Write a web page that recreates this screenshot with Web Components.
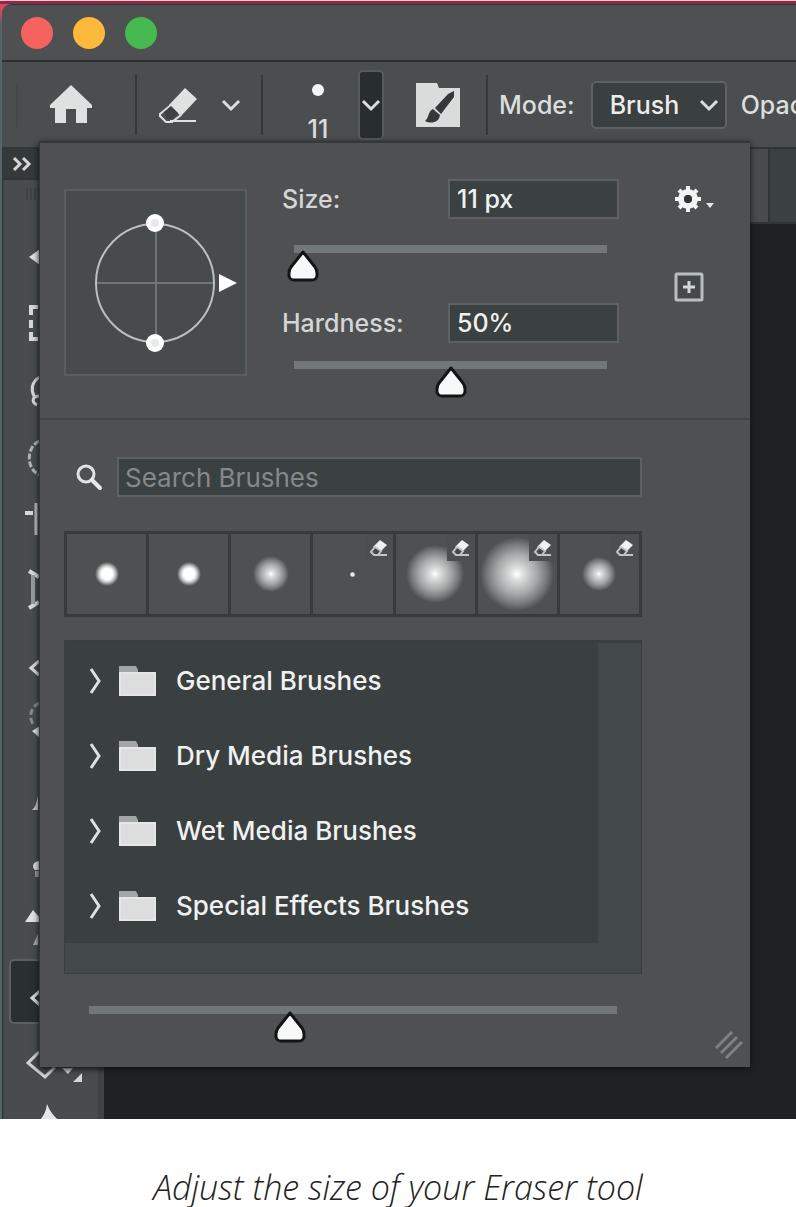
<!DOCTYPE html>
<html lang="en">
<head>
<meta charset="utf-8">
<title>Eraser tool</title>
<style>
  body { margin: 0; background: #fff; font-family: Inter, "Liberation Sans", sans-serif; }
</style>
</head>
<body>
<tutorial-figure>
  <app-window>
    <title-bar slot="title"></title-bar>
    <options-bar slot="options"></options-bar>
    <tool-box slot="tools"></tool-box>
    <document-area slot="document"></document-area>
    <brush-panel slot="panel"></brush-panel>
  </app-window>
  <span slot="caption">Adjust the size of your Eraser tool</span>
</tutorial-figure>

<script>
const define = (name, html) => {
  const template = document.createElement('template');
  customElements.define(name, class extends HTMLElement {
    connectedCallback() {
      if (this.shadowRoot) return;
      const root = this.attachShadow({ mode: 'open' });
      template.innerHTML = typeof html === 'function' ? html(this) : html;
      root.append(template.content.cloneNode(true));
    }
  });
};

const icons = {
  home: [42, 40, '<path fill="#dfe1e1" d="M21 0 42 20v3h-5v15H26V24H16v14H5V23H0v-3z"/>'],
  eraser: [40, 36, '<path fill="#e0e1e1" d="M27 1 39 12 23 29 11 18z"/><path fill="none" stroke="#e0e1e1" stroke-width="2" d="m13 18-11 9v2l6 6h6l9-7M12 34h26"/><path fill="#3b4041" d="m6 25 7-6 7 7-6 6H9z"/>'],
  chevron: [20, 14, '<path fill="none" stroke="#dcdede" stroke-width="3" d="m2 3 8 8 8-8"/>'],
  preset: [44, 44, '<path fill="#dadcdc" d="M0 0h21l2 5h21v39H0z"/><path fill="#33383a" d="M38 8v6L25 31l-6-6L32 11zM17 26l7 6c-1 8-9 9-15 6 4-3 3-10 8-12z"/>'],
  gear: [28, 28, '<circle cx="14" cy="14" r="7" fill="none" stroke="#f2f3f3" stroke-width="6"/><path stroke="#f2f3f3" stroke-width="4" d="M14 1v6M14 21v6M1 14h6M21 14h6M5 5l4 4M19 19l4 4M23 5l-4 4M9 19l-4 4"/><circle cx="14" cy="14" r="4" fill="#303536"/>'],
  caret: [8, 6, '<path fill="#e5e6e6" d="M0 0h8L4 5z"/>'],
  add: [30, 30, '<rect x="2" y="2" width="26" height="26" rx="1" fill="#43484a" stroke="#b9bdbd" stroke-width="3"/><path stroke="#d4d7d7" stroke-width="3" d="M15 9v12M9 15h12"/>'],
  search: [28, 28, '<circle cx="11" cy="11" r="8" fill="none" stroke="#e2e4e4" stroke-width="3"/><path stroke="#e9eaea" stroke-width="4" stroke-linecap="round" d="m17 17 8 8"/>'],
  right: [12, 26, '<path fill="none" stroke="#dfe0e0" stroke-width="3" d="m2 1 8 12-8 12"/>'],
  folder: [37, 30, '<path fill="#a3a6a6" d="M0 0h17l2 4v6H0z"/><path fill="#dcdddd" d="M0 6h37v24H0z"/><path fill="none" stroke="#eeefef" d="M1 7h35v22H1z"/>'],
  miniEraser: [18, 16, '<path fill="#eff0f0" d="m10 0 7 5-7 7-7-5z"/><path fill="#43484a" stroke="#c4c6c6" stroke-width="2" d="M5 7 1 12l3 3h4l3-4z"/><path stroke="#c4c6c6" stroke-width="2" d="M5 15h12"/>'],
  double: [20, 14, '<path fill="none" stroke="#d5d7d7" stroke-width="3" d="m2 1 6 6-6 6M11 1l6 6-6 6"/>'],
  grip: [28, 28, '<path stroke="#7c8182" stroke-width="3" d="M1 17 17 1M6 22 22 6M11 27l16-16"/>'],
  angle: [146, 132, '<g fill="none" stroke="#6f7475" stroke-width="2"><path d="M62 6v120M2 66h118"/></g><circle cx="61" cy="66" r="59" fill="none" stroke="#bdc0c0" stroke-width="2"/><circle cx="61" cy="6" r="9" fill="#fff"/><circle cx="61" cy="126" r="9" fill="#fff"/><circle cx="61" cy="6" r="4" fill="#e8e9e9"/><circle cx="61" cy="126" r="4" fill="#e8e9e9"/><path fill="#fff" d="M125 57v18l18-9z"/>']
};
const icon = (name, extra = '') =>
  `<svg ${extra} width="${icons[name][0]}" height="${icons[name][1]}" viewBox="0 0 ${icons[name][0]} ${icons[name][1]}" aria-hidden="true">${icons[name][2]}</svg>`;
const resetButton = 'button{appearance:none;border:0;padding:0;margin:0;background:none;font:inherit;color:inherit;display:flex;flex:none;align-items:center;justify-content:center}svg{display:block;flex:none;overflow:visible}';

define('tutorial-figure', `
  <style>
    :host { display: block; }
    figure { margin: 0; }
    figcaption { padding: 48px 0 0; text-align: center; color: #222;
      font: italic 300 34px/40px "Open Sans", "Noto Sans", sans-serif; }
  </style>
  <figure><slot></slot><figcaption><slot name="caption"></slot></figcaption></figure>`);

define('app-window', `
  <style>
    :host { display: block; padding: 4px 0 0 2px; overflow: hidden;
      background: linear-gradient(#ffc6d0 0 1px, #8c2a45 1px 4px, transparent 4px), linear-gradient(#d04a60 12px, #56646a 24px); }
    .frame { border-top: 1px solid #303536; border-top-left-radius: 10px; background: #4d4f50; overflow: hidden; }
    .work { display: grid; grid-template-columns: 98px minmax(0, 1fr); }
    .tools { grid-area: 1 / 1; display: grid; }
    .doc { grid-area: 1 / 2; display: grid; }
    .panel { grid-area: 1 / 1 / 2 / 3; z-index: 1; margin: -8px 46px 52px 37px; }
  </style>
  <div class="frame">
    <slot name="title"></slot>
    <slot name="options"></slot>
    <div class="work">
      <div class="tools"><slot name="tools"></slot></div>
      <div class="doc"><slot name="document"></slot></div>
      <div class="panel"><slot name="panel"></slot></div>
    </div>
  </div>`);

define('title-bar', `
  <style>
    :host { display: flex; align-items: center; gap: 20px; height: 57px; padding-left: 19px; background: #4e5051;
      border-bottom: 2px solid #2d3133; box-sizing: border-box; }
    ${resetButton}
    button { width: 32px; height: 32px; border-radius: 50%; }
    .close { background: #f5635f; } .min { background: #fdb93c; } .zoom { background: #46b950; }
  </style>
  <button class="close" aria-label="Close"></button>
  <button class="min" aria-label="Minimise"></button>
  <button class="zoom" aria-label="Zoom"></button>`);

define('options-bar', `
  <style>
    :host { display: flex; align-items: center; height: 87px; box-sizing: border-box; padding: 1px 0 0 14px;
      border-bottom: 2px solid #303536; background: #4b4e4f; color: #dcdede; font-size: 25px; font-weight: 500;
      white-space: nowrap; overflow: hidden; }
    ${resetButton}
    .handle { flex: none; width: 2px; height: 44px; background: #444849; margin-right: 32px; }
    .sep { flex: none; width: 2px; height: 60px; background: #333839; }
    .home { margin-right: 43px; }
    .eraser { margin: 0 23px 0 21px; }
    .menu { margin-right: 20px; }
    .brush { flex-direction: column; width: 32px; height: 70px; margin: 0 24px 0 39px; justify-content: space-between; line-height: 22px; }
    .brush i { width: 12px; height: 12px; margin-top: 14px; border-radius: 50%; background: #f4f5f5; }
    .open { width: 26px; height: 70px; border: 2px solid #565b5c; border-radius: 5px; background: #282d2f; margin-right: 32px; }
    .preset { margin-right: 26px; }
    label { margin: 0 16px 0 11px; }
    select { appearance: none; width: 136px; height: 48px; margin: 0 14px 0 0; padding: 0 0 0 17px; flex: none;
      font: inherit; color: #eceded; border: 2px solid #5d6364; border-radius: 5px;
      background: #3a3f40 url("data:image/svg+xml,%3Csvg xmlns='http://www.w3.org/2000/svg' width='20' height='14'%3E%3Cpath fill='none' stroke='%23dcdede' stroke-width='3' d='m2 3 8 8 8-8'/%3E%3C/svg%3E") no-repeat right 6px center; }
  </style>
  <span class="handle"></span>
  <button class="home" aria-label="Home">${icon('home')}</button>
  <span class="sep"></span>
  <button class="eraser" aria-label="Eraser tool">${icon('eraser')}</button>
  <button class="menu" aria-label="Tool presets">${icon('chevron')}</button>
  <span class="sep"></span>
  <button class="brush"><i></i>11</button>
  <button class="open" aria-label="Brush preset picker">${icon('chevron')}</button>
  <button class="preset" aria-label="Brush settings">${icon('preset')}</button>
  <span class="sep"></span>
  <label for="mode">Mode:</label>
  <select id="mode"><option>Brush</option><option>Pencil</option><option>Block</option></select>
  <span>Opac</span>`);

const tools = [
  ['Move', '<path fill="#dfe1e1" d="M27 35 38 27v16z"/>'],
  ['Marquee', '<path fill="none" stroke="#d5d8d8" stroke-width="4" d="M36 18h-7v8M29 31v8M29 43v7h7"/>'],
  ['Lasso', '<path fill="none" stroke="#d5d8d8" stroke-width="3" d="M38 21c-9 5-9 13-6 19M38 40c-8 0-9 6-3 9"/>'],
  ['Quick selection', '<path fill="none" stroke="#aeb2b2" stroke-width="3" stroke-dasharray="6 2" d="M37 18c-13 7-13 27 0 34"/>'],
  ['Crop', '<path fill="none" stroke="#d5d8d8" stroke-width="4" d="M23 23h8"/><path stroke="#b9bcbc" stroke-width="3" d="M34 13v32"/>'],
  ['Frame', '<path fill="none" stroke="#d5d8d8" stroke-width="4" d="m27 14 10 6M27 51l10-6"/><path stroke="#969b9b" stroke-width="4" d="M31 18v29"/>'],
  ['Eyedropper', '<path fill="none" stroke="#d5d8d8" stroke-width="3" d="m37 37-8 7 8 7"/>'],
  ['Healing', '<path fill="none" stroke="#858a8b" stroke-width="3" stroke-dasharray="6 3" d="M37 12c-10 5-10 17-5 22"/><path fill="#dfe1e1" d="m30 40 8-5v12z"/>'],
  ['Brush', '<path fill="#c4c7c7" d="M36 38v14h-6c4-3 4-7 6-14z"/>'],
  ['Clone stamp', '<path fill="#dfe1e1" d="M38 36c-8 0-8 7-5 9h5z"/><path fill="#989c9d" d="M33 46h5v6h-5z"/>'],
  ['History brush', '<path fill="#dfe1e1" d="m31 18 7 8v4H23z"/><path fill="#a8acac" d="M36 42v11h-5z"/>'],
  ['Eraser', '<path fill="none" stroke="#d5d8d8" stroke-width="3" d="m38 33-8 7 8 7"/>'],
  ['Paint bucket', '<path fill="none" stroke="#cfd2d2" stroke-width="3" d="M37 26 26 37l17 14 10-10"/><path fill="#d5d8d8" d="M60 42h11l-5 6zM80 47v9h-9z"/>'],
  ['Blur', '<path fill="#e4e5e5" d="M45 11c3 8 8 13 12 17v20H37V28c4-4 7-9 8-17z"/>']
];
define('tool-box', `
  <style>
    :host { display: block; contain: size; overflow: hidden; background: linear-gradient(90deg, #303536 1px, #484c4e 2px);
      border-right: 2px solid #3d4243; }
    ${resetButton}
    .expand { width: 100%; height: 31px; background: #34393a; justify-content: flex-start; padding-left: 10px;
      border-bottom: 2px solid #303536; box-sizing: border-box; }
    .grip { height: 12px; width: 46px; margin: 8px 0 22px 24px; background: repeating-linear-gradient(90deg, #3d4243 0 2px, transparent 2px 4px); }
    .tool { width: 100%; height: 67px; justify-content: flex-start; box-sizing: border-box; }
    .tool[aria-pressed=true] { background: linear-gradient(#2a2f31, #2a2f31) padding-box; border: 2px solid #5b6061; border-radius: 5px;
      width: 80px; height: 65px; margin: 0 0 2px 7px; }
    .tool[aria-pressed=true] svg { margin-left: -9px; }
  </style>
  <button class="expand" aria-label="Expand tools">${icon('double')}</button>
  <div class="grip"></div>
  ${tools.map(([name, art]) => `<button class="tool" aria-label="${name}" aria-pressed="${name === 'Eraser'}"><svg width="90" height="67" viewBox="0 0 90 67" aria-hidden="true">${art}</svg></button>`).join('')}`);

define('document-area', `
  <style>
    :host { display: flex; flex-direction: column; background: #1e2225; border-left: 4px solid #3e4344; }
    .tabs { display: flex; height: 75px; background: #3b4042; box-sizing: border-box; border-bottom: 2px solid #303536; }
    .tab { flex: 1; margin-right: 26px; background: #484c4d; border-right: 2px solid #303536; }
  </style>
  <div class="tabs"><div class="tab"></div></div>`);

const rangeStyles = `
  input[type=range] { appearance: none; display: block; height: 38px; box-sizing: border-box; margin: 0;
    background: linear-gradient(#727878, #727878) no-repeat 16px 0 / calc(100% - 32px) 8px; }
  input[type=range]::-webkit-slider-runnable-track { height: 38px; background: none; }
  input[type=range]::-webkit-slider-thumb { appearance: none; width: 32px; height: 32px; margin-top: 5px;
    background: url("data:image/svg+xml,%3Csvg xmlns='http://www.w3.org/2000/svg' width='32' height='32'%3E%3Cpath fill='%23f8f8f8' stroke='%23111516' stroke-width='3' stroke-linejoin='round' d='M16 2 28 17q2 3 2 6v3q-1 4-5 4H7q-4 0-5-4v-3q0-3 2-6z'/%3E%3C/svg%3E") no-repeat; }`;

define('brush-setting', host => `
  <style>
    :host { display: block; }
    .row { display: flex; align-items: center; justify-content: space-between; margin-bottom: var(--slider-gap, 26px); }
    input[type=text] { box-sizing: border-box; width: 171px; height: 40px; padding: 0 0 0 7px; font: inherit; color: #f0f1f1;
      background: #3b4041; border: 2px solid #5c6263; border-radius: 0; margin: 0; }
    ${rangeStyles}
    input[type=range] { width: calc(100% + 8px); margin: 0 -4px; }
  </style>
  <div class="row"><label for="text">${host.getAttribute('label')}:</label><input id="text" type="text" value="${host.getAttribute('text')}"></div>
  <input type="range" min="0" max="100" value="${host.getAttribute('value')}" aria-label="${host.getAttribute('label')}">`);

define('brush-swatch', host => `
  <style>
    :host { display: block; position: relative; flex: 1; }
    ${resetButton}
    button { width: 100%; height: 100%; }
    i { width: ${host.getAttribute('size')}px; height: ${host.getAttribute('size')}px; border-radius: 50%;
      background: radial-gradient(closest-side, ${host.getAttribute('fill')}); }
    .badge { position: absolute; top: 0; right: 0; padding: 6px 5px 5px 5px; background: #4c4f50; display: block; }
  </style>
  <button aria-label="Brush preset"><i></i></button>
  ${host.hasAttribute('eraser') ? `<span class="badge">${icon('miniEraser')}</span>` : ''}`);

define('brush-folder', `
  <style>
    :host { display: block; }
    ${resetButton}
    button { width: 100%; height: 75px; justify-content: flex-start; padding-left: 24px; }
    .folder { margin: 0 20px 0 18px; }
  </style>
  <button aria-expanded="false">${icon('right')}${icon('folder', 'class="folder"')}<slot></slot></button>`);

const hard = '#fff 0 45%, rgba(255,255,255,.75) 65%, rgba(255,255,255,0) 100%';
const soft = '#fff 0, #dedfdf 16%, #a5a8a8 55%, #777b7c 80%, rgba(80,83,84,0) 100%';
define('brush-panel', `
  <style>
    :host { display: block; position: relative; background: #4e5051; color: #d3d6d6; font-size: 25px; line-height: 32px; font-weight: 500;
      border-top: 2px solid #343839; border-left: 1px solid #303536; box-shadow: 0 2px 6px #0d1113; }
    ${resetButton}
    ${rangeStyles}
    .settings { display: grid; grid-template-columns: 183px minmax(0, 337px) 40px; justify-content: start;
      padding: 36px 0 19px 24px; border-bottom: 2px solid #3f4445; }
    .angle { height: 187px; box-sizing: border-box; margin-top: 10px; border: 2px solid #585d5e; background: #474b4c; display: grid; place-content: center; padding: 0 0 0 23px; }
    .form { margin-left: 35px; margin-right: -35px; }
    .form brush-setting + brush-setting { margin-top: 20px; --slider-gap: 18px; }
    .actions { margin-left: 90px; padding-top: 6px; display: flex; flex-direction: column; gap: 59px; align-items: start; }
    .actions .gear { gap: 4px; }
    .actions .gear svg + svg { margin-top: 14px; }
    .library { padding: 37px 108px 23px 24px; }
    .search { display: flex; align-items: center; gap: 14px; padding-left: 11px; margin-bottom: 34px; }
    .search label { display: flex; }
    .search input { flex: 1; min-width: 0; box-sizing: border-box; height: 40px; padding: 0 0 0 6px; margin: 0; font: inherit; font-size: 26px; font-weight: 400;
      background: #3b4041; border: 2px solid #5c6263; color: #f0f1f1; }
    .search input::placeholder { color: #85898a; opacity: 1; }
    .strip { display: flex; gap: 3px; padding: 3px; height: 86px; box-sizing: border-box; margin-bottom: 23px; background: #363b3c; }
    .strip brush-swatch { background: #4e5051; }
    .folders { background: #434849; padding: 0 43px 30px 0; border: 1px solid #393e3f; border-top-width: 3px; color: #f0f1f1; font-size: 26px; }
    .folders div { background: #3a3f40; }
    input.scale { width: calc(100% - 18px); margin: 32px 9px 0; }
    .resize { position: absolute; right: 7px; bottom: 8px; }
  </style>
  <div class="settings">
    <div class="angle">${icon('angle')}</div>
    <div class="form">
      <brush-setting label="Size" text="11 px" value="3"></brush-setting>
      <brush-setting label="Hardness" text="50%" value="50"></brush-setting>
    </div>
    <div class="actions">
      <button class="gear" aria-label="Panel menu">${icon('gear')}${icon('caret')}</button>
      <button aria-label="New preset">${icon('add')}</button>
    </div>
  </div>
  <div class="library">
    <div class="search"><label for="q" aria-label="Search Brushes">${icon('search')}</label><input id="q" type="text" placeholder="Search Brushes"></div>
    <div class="strip">
      <brush-swatch size="24" fill="${hard}"></brush-swatch>
      <brush-swatch size="24" fill="${hard}"></brush-swatch>
      <brush-swatch size="36" fill="${soft}"></brush-swatch>
      <brush-swatch size="5" fill="#e8e9e9 0 60%, #999 100%" eraser></brush-swatch>
      <brush-swatch size="58" fill="${soft}" eraser></brush-swatch>
      <brush-swatch size="74" fill="${soft}" eraser></brush-swatch>
      <brush-swatch size="34" fill="${soft}" eraser></brush-swatch>
    </div>
    <div class="folders"><div>
      <brush-folder>General Brushes</brush-folder>
      <brush-folder>Dry Media Brushes</brush-folder>
      <brush-folder>Wet Media Brushes</brush-folder>
      <brush-folder>Special Effects Brushes</brush-folder>
    </div></div>
    <input class="scale" type="range" min="0" max="100" value="38" aria-label="Thumbnail size">
  </div>
  <span class="resize">${icon('grip')}</span>`);
</script>
</body>
</html>
